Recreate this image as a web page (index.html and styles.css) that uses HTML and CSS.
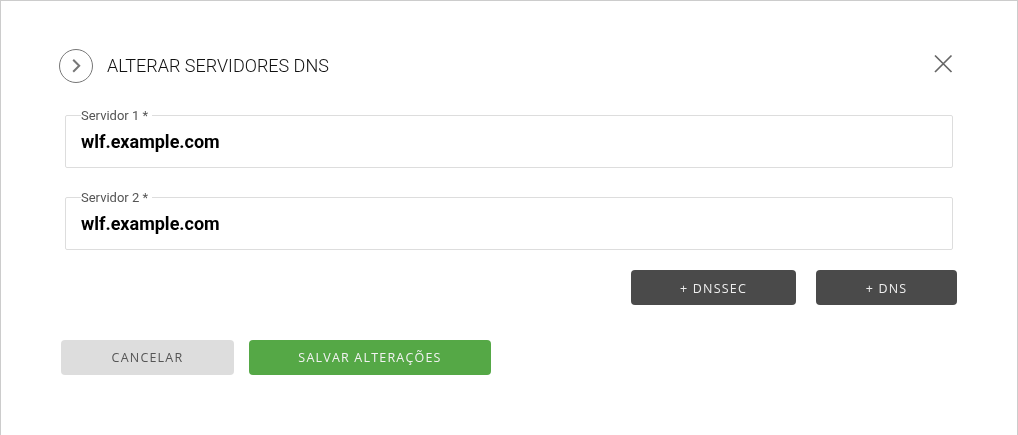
FILE: index.html
```html
<!DOCTYPE html>
<html lang="pt-BR">
<head>
    <meta charset="UTF-8">
    <title>Alterar servidores DNS</title>
    <link rel="stylesheet" href="styles.css">
</head>
<body>
    <div class="modal">
        <div class="modal-header">
            <span class="step-icon">
                <svg width="34" height="34" viewBox="0 0 34 34" fill="none">
                    <circle cx="17" cy="17" r="16.5" stroke="#777"/>
                    <path d="M14.2 10.8L20.2 16.8L14.2 22.8" stroke="#777" stroke-width="2"/>
                </svg>
            </span>
            <h2 class="modal-title">ALTERAR SERVIDORES DNS</h2>
            <button type="button" class="close">
                <svg width="20" height="20" viewBox="0 0 20 20" fill="none">
                    <path d="M2 1.5L18.5 18M18.5 1.5L2 18" stroke="#666" stroke-width="1.7"/>
                </svg>
            </button>
        </div>

        <fieldset class="field">
            <legend>Servidor 1 *</legend>
            <input type="text" value="wlf.example.com">
        </fieldset>
        <fieldset class="field">
            <legend>Servidor 2 *</legend>
            <input type="text" value="wlf.example.com">
        </fieldset>

        <div class="add-controls">
            <button type="button" class="btn btn-dark btn-dnssec">+ DNSSEC</button>
            <button type="button" class="btn btn-dark btn-dns">+ DNS</button>
        </div>

        <div class="form-controls">
            <button type="button" class="btn btn-cancel">CANCELAR</button>
            <button type="button" class="btn btn-save">SALVAR ALTERAÇÕES</button>
        </div>
    </div>
</body>
</html>
```

FILE: styles.css
```css
* {
    box-sizing: border-box;
}

body {
    margin: 0;
    background: #fff;
    font-family: Roboto, sans-serif;
}

.modal {
    height: 435px;
    padding: 48px 60px 0 60px;
    border: 1px solid #ccc;
    border-bottom: none;
    overflow: hidden;
    will-change: transform;
}

.modal-header {
    display: flex;
    align-items: center;
    height: 34px;
    margin-bottom: 25px;
    margin-left: -2px;
    margin-right: 4px;
}

.step-icon {
    display: flex;
    width: 34px;
    height: 34px;
}

.modal-title {
    flex: 1;
    margin: -2px 0 0 14px;
    font-size: 18px;
    font-weight: 300;
    color: #111;
}

.close {
    display: flex;
    margin: -5px 0 0 0;
    padding: 0;
    border: none;
    background: none;
    cursor: pointer;
}

.field {
    height: 60px;
    margin: 0 4px 22px 4px;
    padding: 0 15px;
    border: 1px solid #ddd;
    border-radius: 2px;
}

.field legend {
    padding: 0 4px 0 0;
    margin-left: 0;
    font-size: 13px;
    line-height: 15px;
    color: #555;
}

.field input {
    display: block;
    width: 100%;
    padding: 0;
    margin-top: 6px;
    border: none;
    outline: none;
    background: transparent;
    font-family: Roboto, sans-serif;
    font-size: 18px;
    font-weight: 700;
    line-height: 26px;
    color: #000;
}

.btn {
    height: 35px;
    padding: 0;
    border: none;
    border-radius: 4px;
    font-family: "Open Sans", sans-serif;
    font-size: 12.5px;
    letter-spacing: 1.2px;
    cursor: pointer;
}

.add-controls {
    display: flex;
    justify-content: flex-end;
    gap: 20px;
    margin-top: -2px;
}

.btn-dark {
    padding-top: 1px;
    background: #4a4a4a;
    color: #eee;
}

.btn-dnssec {
    width: 165px;
}

.btn-dns {
    width: 141px;
}

.form-controls {
    display: flex;
    gap: 15px;
    margin-top: 35px;
}

.btn-cancel {
    width: 173px;
    background: #ddd;
    color: #555;
}

.btn-save {
    width: 242px;
    background: #55a846;
    color: #f2f2f2;
}
```
